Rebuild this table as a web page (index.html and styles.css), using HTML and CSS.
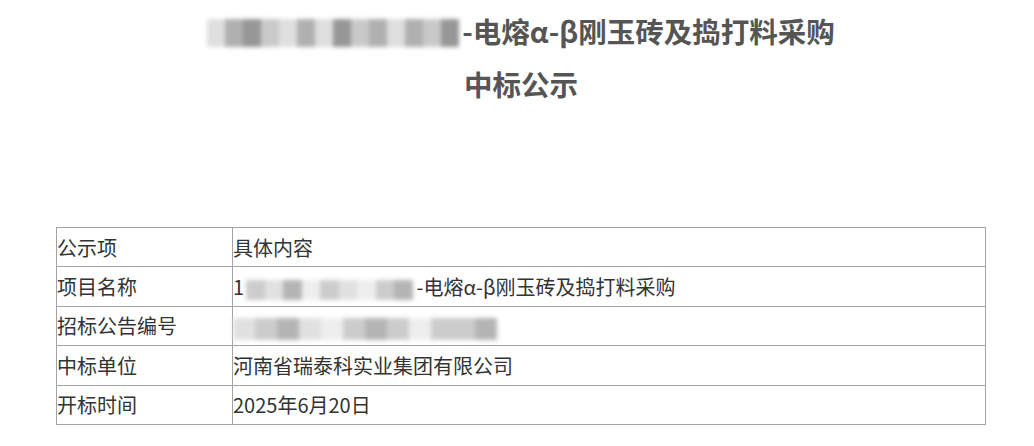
FILE: index.html
```html
<!DOCTYPE html>
<html lang="zh-CN">
<head>
    <meta charset="UTF-8">
    <meta name="viewport" content="width=device-width, initial-scale=1.0">
    <title>中标公示</title>
    <link rel="stylesheet" href="styles.css">
</head>
<body>
    <div class="notice">
        <h1 class="notice-title">
            <span class="line"><span class="mask mask-title"><i class="c4"></i><i class="c2"></i><i class="c1"></i><i class="c3"></i><i class="c4"></i><i class="c2"></i><i class="c4"></i><i class="c1"></i><i class="c3"></i><i class="c2"></i><i class="c4"></i><i class="c2"></i><i class="c3"></i><i class="c1"></i></span>-电熔α-β刚玉砖及捣打料采购</span>
            <span class="line">中标公示</span>
        </h1>

        <table class="notice-table">
            <tr>
                <td class="label">公示项</td>
                <td>具体内容</td>
            </tr>
            <tr>
                <td class="label">项目名称</td>
                <td>1<span class="mask mask-name"><i class="c3"></i><i class="c4"></i><i class="c2"></i><i class="c5"></i><i class="c3"></i><i class="c4"></i><i class="c5"></i><i class="c3"></i><i class="c2"></i></span>-电熔α-β刚玉砖及捣打料采购</td>
            </tr>
            <tr>
                <td class="label">招标公告编号</td>
                <td><span class="mask mask-code"><i class="c4"></i><i class="c3"></i><i class="c2"></i><i class="c4"></i><i class="c5"></i><i class="c3"></i><i class="c2"></i><i class="c3"></i><i class="c5"></i><i class="c3"></i><i class="c3"></i><i class="c2"></i></span></td>
            </tr>
            <tr>
                <td class="label">中标单位</td>
                <td>河南省瑞泰科实业集团有限公司</td>
            </tr>
            <tr>
                <td class="label">开标时间</td>
                <td>2025年6月20日</td>
            </tr>
        </table>
    </div>
</body>
</html>
```

FILE: styles.css
```css
body {
    margin: 0;
    background-color: #fff;
    font-family: "Noto Sans CJK SC", "Noto Sans", sans-serif;
    color: #333;
}

.notice {
    width: 930px;
    margin-left: 56px;
}

.notice-title {
    margin: 4px 0 0;
    text-align: center;
    font-size: 28.5px;
    font-weight: bold;
    line-height: 53px;
    color: #555;
}

.notice-title .line {
    display: block;
}

/* blurred-out parts of the original text */
.mask {
    display: inline-flex;
    vertical-align: middle;
    filter: blur(2px);
}

.mask i {
    display: block;
    width: 20px;
}

.mask .c1 { background-color: #8c8c8c; }
.mask .c2 { background-color: #a8a8a8; }
.mask .c3 { background-color: #c4c4c4; }
.mask .c4 { background-color: #dcdcdc; }
.mask .c5 { background-color: #ececec; }

.mask-title {
    height: 28px;
    margin-right: 3px;
    margin-top: -4px;
    opacity: 0.9;
}

.mask-title i {
    width: 18px;
}

.mask-name {
    height: 20px;
    margin: 0 4px 0 2px;
    opacity: 0.85;
}

.mask-name i {
    width: 18.5px;
}

.mask-code {
    height: 22px;
    opacity: 0.85;
}

.mask-code i {
    width: 22px;
}

.notice-table {
    width: 100%;
    margin-top: 117px;
    border-collapse: collapse;
    font-size: 20px;
    color: #333;
}

.notice-table td {
    height: 38.4px;
    padding: 0;
    border: 1px solid #a3a3a3;
    white-space: nowrap;
}

.notice-table .label {
    width: 175px;
}
```
